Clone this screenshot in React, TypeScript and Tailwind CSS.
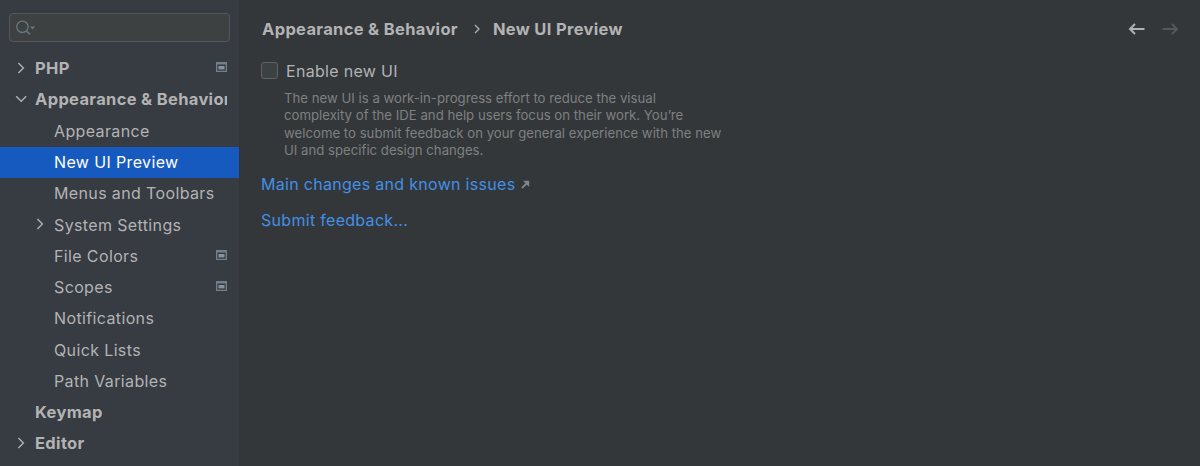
import React, { useState } from 'react';

type Item = {
    label: string;
    level: number;
    arrow?: 'open' | 'closed';
    project?: boolean;
};

const items: Item[] = [
    { label: 'PHP', level: 0, arrow: 'closed', project: true },
    { label: 'Appearance & Behavior', level: 0, arrow: 'open' },
    { label: 'Appearance', level: 1 },
    { label: 'New UI Preview', level: 1 },
    { label: 'Menus and Toolbars', level: 1 },
    { label: 'System Settings', level: 1, arrow: 'closed' },
    { label: 'File Colors', level: 1, project: true },
    { label: 'Scopes', level: 1, project: true },
    { label: 'Notifications', level: 1 },
    { label: 'Quick Lists', level: 1 },
    { label: 'Path Variables', level: 1 },
    { label: 'Keymap', level: 0 },
    { label: 'Editor', level: 0, arrow: 'closed' },
];

const Arrow = ({ open }: { open: boolean }) => (
    <svg width="12" height="12" viewBox="0 0 12 12" fill="none" stroke="#afb1b3" strokeWidth="1.4" className="mb-[1px]">
        <path d={open ? 'M1.2 3.2L6.2 8.2L11.2 3.2' : 'M3.4 1L8.4 6L3.4 11'} />
    </svg>
);

// Marks settings that are stored per project
const ProjectIcon = () => (
    <svg width="11" height="10" viewBox="0 0 11 10" className="mb-[2px] shrink-0">
        <path d="M0 0H11V10H0ZM1.3 2.4V8.8H9.7V2.4Z" fill="#71808b" fillRule="evenodd" />
        <rect x="2.5" y="4" width="6" height="3.4" fill="#8494a0" />
    </svg>
);

const SearchField = () => (
    <div className="ml-[9px] mt-[13px] flex h-[29px] w-[221px] items-center rounded-[4px] border border-[#55585a] bg-[#3d4142] pl-[6px]">
        <svg width="22" height="18" viewBox="0 0 22 18" fill="none">
            <circle cx="6.4" cy="7.8" r="5.7" stroke="#687981" strokeWidth="1.3" />
            <path d="M10.4 12L14 15.4" stroke="#687981" strokeWidth="1.6" />
            <path d="M14 7.4H19.1L16.5 10.6Z" fill="#687981" />
        </svg>
    </div>
);

export default function App() {
    const [selected, setSelected] = useState<string>('New UI Preview');

    return (
        <div className="flex h-[466px] w-[1200px] overflow-hidden bg-[#33373a] font-['Inter',sans-serif] text-[16px] text-[#b3b3b3]">
            {/* Sidebar */}
            <aside className="h-full w-[240px] shrink-0 border-r border-[#313539] bg-[#373b42]">
                <SearchField />
                <ul className="mt-[10.8px]">
                    {items.map((item) => (
                        <li
                            key={item.label}
                            onClick={() => setSelected(item.label)}
                            className={`flex h-[31.25px] items-center pr-[12px] ${item.level === 0 ? 'pl-[15px] text-[16.5px] font-bold tracking-[0.33px]' : 'pl-[34px] tracking-[0.37px]'
                                } ${item.label === selected ? 'bg-[#175abf] text-white' : ''}`}
                        >
                            <span className="w-[20px] shrink-0">
                                {item.arrow && <Arrow open={item.arrow === 'open'} />}
                            </span>
                            <span className="flex-1 overflow-hidden whitespace-nowrap">{item.label}</span>
                            {item.project && <ProjectIcon />}
                        </li>
                    ))}
                </ul>
            </aside>

            {/* Main Content */}
            <main className="flex-1 pl-[21px]">
                <header className="flex h-[58px] items-center justify-between pl-[1px] pr-[21px]">
                    <div className="flex items-center text-[16.5px] font-bold tracking-[0.33px]">
                        <span>Appearance &amp; Behavior</span>
                        <svg width="7" height="10" viewBox="0 0 7 10" className="ml-[16px] mr-[12px]" fill="none" stroke="#afb1b3" strokeWidth="1.3">
                            <path d="M1 1L5 5L1 9" />
                        </svg>
                        <span>New UI Preview</span>
                    </div>
                    <div className="mb-[1px] flex gap-[17px]">
                        <svg width="17" height="12" viewBox="0 0 17 12" fill="none" stroke="#afb1b3" strokeWidth="2">
                            <path d="M16.5 6H2M7 1L2 6L7 11" />
                        </svg>
                        <svg width="17" height="12" viewBox="0 0 17 12" fill="none" stroke="#55585a" strokeWidth="2">
                            <path d="M0.5 6H15M10 1L15 6L10 11" />
                        </svg>
                    </div>
                </header>

                <label className="flex h-[26px] items-center">
                    <span className="mb-[2px] mr-[8px] h-[17px] w-[17px] rounded-[3px] border border-[#626361] bg-[#3c4243]" />
                    <span className="tracking-[0.3px]">Enable new UI</span>
                </label>
                <p className="ml-[23px] mt-[6px] whitespace-nowrap text-[13.2px] leading-[17.4px] text-[#7f8080]">
                    The new UI is a work-in-progress effort to reduce the visual<br />
                    complexity of the IDE and help users focus on their work. You’re<br />
                    welcome to submit feedback on your general experience with the new<br />
                    UI and specific design changes.
                </p>

                <div className="mt-[12px] flex flex-col items-start gap-[12px] text-[#438fe6]">
                    <a href="#" className="flex items-center leading-[24px] tracking-[0.3px]">
                        Main changes and known issues
                        <svg width="9" height="9" viewBox="0 0 9 9" className="ml-[6px] mt-[1px]" fill="none">
                            <path d="M1 8L6 3" stroke="#7d868b" strokeWidth="1.8" />
                            <path d="M2 0.8H8.2V7Z" fill="#7d868b" />
                        </svg>
                    </a>
                    <a href="#" className="leading-[24px] tracking-[0.3px]">Submit feedback...</a>
                </div>
            </main>
        </div>
    );
}
